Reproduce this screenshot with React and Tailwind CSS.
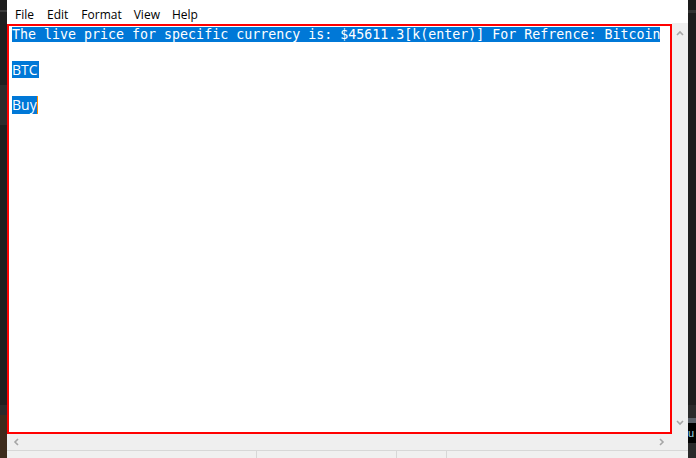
import React from 'react';

const Chevron = ({ dir }) => {
  const paths = {
    up: 'M1 5 L4 2 L7 5',
    down: 'M1 2 L4 5 L7 2',
    left: 'M5 1 L2 4 L5 7',
    right: 'M2 1 L5 4 L2 7',
  };
  return (
    <svg width="8" height="8" viewBox="0 0 8 8" className="block">
      <path d={paths[dir]} fill="none" stroke="#a6a6a6" strokeWidth="1.6" />
    </svg>
  );
};

const menu = [
  { label: 'File', ml: 'ml-[8px]' },
  { label: 'Edit', ml: 'ml-[13px]' },
  { label: 'Format', ml: 'ml-[13px]' },
  { label: 'View', ml: 'ml-[12px]' },
  { label: 'Help', ml: 'ml-[12px]' },
];

export default function App() {
  return (
    <div className="w-[696px] h-[458px] flex overflow-hidden bg-white">
      {/* desktop strip, left */}
      <div className="w-[7px] flex flex-col">
        <div className="h-[10px] bg-[#1c1c1c]" />
        <div className="h-[2px] bg-[#3a3a3a]" />
        <div className="h-[73px] bg-[#1f1f1f]" />
        <div className="h-[40px] bg-[#2c2c2c]" />
        <div className="h-[280px] bg-[#1f1f1f]" />
        <div className="h-[10px] bg-[#2a2a2a]" />
        <div className="flex-1 bg-[#3d2b1c]" />
      </div>

      {/* notepad window */}
      <div className="w-[681px] flex flex-col">
        {/* menu */}
        <div className="h-[23px] bg-white flex items-center text-[12px] text-black font-['Open_Sans','Noto_Sans',sans-serif] pt-[6px]">
          {menu.map((m) => (
            <span key={m.label} className={m.ml}>{m.label}</span>
          ))}
        </div>

        {/* editor + vertical scrollbar */}
        <div className="h-[411px] flex">
          <div className="w-[665px] pt-[1px] bg-white">
            <div className="h-[410px] border-2 border-[#ff0000] pl-[3px] pt-[1px]">
              <div className="h-[15px] flex">
                <span className="bg-[#0078d7] text-white font-['DejaVu_Sans_Mono',monospace] text-[13.3px] leading-[15px] whitespace-pre">
                  The live price for specific currency is: $45611.3[k(enter)] For Refrence: Bitcoin
                </span>
              </div>
              <div className="h-[17px] mt-[19px] flex">
                <span className="bg-[#0078d7] text-white font-['Open_Sans','Noto_Sans',sans-serif] text-[14px] leading-[17px] pr-[1px]">
                  BTC
                </span>
              </div>
              <div className="h-[18px] mt-[18px] flex">
                <span className="bg-[#0078d7] text-white font-['Open_Sans','Noto_Sans',sans-serif] text-[14px] leading-[18px]">
                  Buy
                </span>
                <span className="w-[1px] bg-[#ff8c00]" />
              </div>
            </div>
          </div>
          <div className="flex-1 bg-[#efefef] flex flex-col items-center justify-between py-[7px]">
            <Chevron dir="up" />
            <Chevron dir="down" />
          </div>
        </div>

        {/* horizontal scrollbar */}
        <div className="h-[16px] bg-[#efefef] flex items-center">
          <div className="w-[665px] flex items-center justify-between px-[6px]">
            <Chevron dir="left" />
            <Chevron dir="right" />
          </div>
        </div>

        {/* status bar */}
        <div className="flex-1 bg-[#f0f0f0] border-t border-[#d7d7d7] flex">
          <div className="w-[250px] border-r border-[#d7d7d7]" />
          <div className="w-[140px] border-r border-[#d7d7d7]" />
          <div className="w-[50px] border-r border-[#d7d7d7]" />
        </div>
      </div>

      {/* desktop strip, right */}
      <div className="flex-1 flex flex-col">
        <div className="h-[10px] bg-[#1a1a1a]" />
        <div className="h-[3px] bg-[#333333]" />
        <div className="h-[392px] bg-[#1e1e1e]" />
        <div className="h-[13px] bg-[#2a2a2a]" />
        <div className="h-[5px] bg-[#5a6068]" />
        <div className="h-[20px] bg-black text-[#9fd7e0] text-[11px] leading-[20px] font-['Liberation_Sans',sans-serif] overflow-hidden">
          u
        </div>
        <div className="flex-1 bg-[#2a2a2a]" />
      </div>
    </div>
  );
}
